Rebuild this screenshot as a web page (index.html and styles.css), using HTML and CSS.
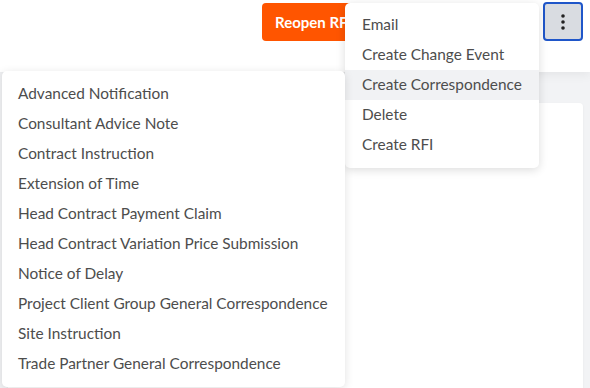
FILE: index.html
```html
<!DOCTYPE html>
<html lang="en">
<head>
    <meta charset="UTF-8">
    <meta name="viewport" content="width=device-width, initial-scale=1.0">
    <title>RFI</title>
    <link rel="stylesheet" href="styles.css">
</head>
<body>

    <div class="header">
        <button class="btn-reopen">Reopen RFI</button>

        <!-- Menu de ações -->
        <div class="more">
            <button class="btn-more" aria-label="More actions">
                <svg width="4" height="16" viewBox="0 0 4 16">
                    <circle cx="2" cy="2" r="1.8" fill="#222"/>
                    <circle cx="2" cy="8" r="1.8" fill="#222"/>
                    <circle cx="2" cy="14" r="1.8" fill="#222"/>
                </svg>
            </button>

            <ul class="menu actions">
                <li class="item">Email</li>
                <li class="item">Create Change Event</li>
                <li class="item active">
                    Create Correspondence
                    <ul class="menu submenu">
                        <li class="item">Advanced Notification</li>
                        <li class="item">Consultant Advice Note</li>
                        <li class="item">Contract Instruction</li>
                        <li class="item">Extension of Time</li>
                        <li class="item">Head Contract Payment Claim</li>
                        <li class="item">Head Contract Variation Price Submission</li>
                        <li class="item">Notice of Delay</li>
                        <li class="item">Project Client Group General Correspondence</li>
                        <li class="item">Site Instruction</li>
                        <li class="item">Trade Partner General Correspondence</li>
                    </ul>
                </li>
                <li class="item">Delete</li>
                <li class="item">Create RFI</li>
            </ul>
        </div>
    </div>

    <div class="content">
        <div class="card"></div>
    </div>

</body>
</html>
```

FILE: styles.css
```css
body {
    font-family: 'Lato', 'Liberation Sans', sans-serif;
    background-color: #f2f3f5;
    margin: 0;
    padding: 0;
    height: 388px;
    overflow: hidden;
}

.header {
    background-color: #ffffff;
    height: 72px;
    display: flex;
    align-items: flex-start;
    justify-content: flex-end;
    padding: 2px 7px 0 0;
    box-sizing: border-box;
    box-shadow: 0 3px 10px rgba(0, 0, 0, 0.06);
    position: relative;
    z-index: 2;
}

.btn-reopen {
    background-color: #ff5500;
    color: #ffffff;
    border: none;
    border-radius: 4px;
    font-family: inherit;
    font-size: 15px;
    font-weight: bold;
    height: 38px;
    margin-top: 1px;
    padding: 0 13px;
    margin-right: 178px;
}

.more {
    position: relative;
}

.btn-more {
    width: 40px;
    height: 39px;
    background-color: #d9dce1;
    border: 2px solid #1f56c9;
    border-radius: 4px;
    display: flex;
    align-items: center;
    justify-content: center;
    padding: 0;
}

.menu {
    list-style: none;
    margin: 0;
    padding: 7px 0 8px;
    background-color: #ffffff;
    border-radius: 5px;
    box-shadow: 0 2px 10px rgba(0, 0, 0, 0.14);
    position: absolute;
}

.actions {
    top: 1px;
    right: calc(100% + 4px);
    width: 194px;
}

.item {
    height: 30px;
    line-height: 29px;
    padding: 0 17px;
    color: #4d4d4d;
    font-size: 15.4px;
    white-space: nowrap;
    position: relative;
}

.item.active {
    background-color: #f1f2f4;
}

.submenu {
    top: 1px;
    right: 100%;
    width: 343px;
    padding: 8px 0;
    box-shadow: 0 2px 10px rgba(0, 0, 0, 0.12);
}

.submenu .item {
    padding: 0 16px;
    background-color: #ffffff;
}

.content {
    padding: 31px 7px 0 8px;
}

.card {
    background-color: #ffffff;
    border-radius: 4px;
    height: 300px;
    box-shadow: 0 1px 3px rgba(0, 0, 0, 0.05);
}
```
